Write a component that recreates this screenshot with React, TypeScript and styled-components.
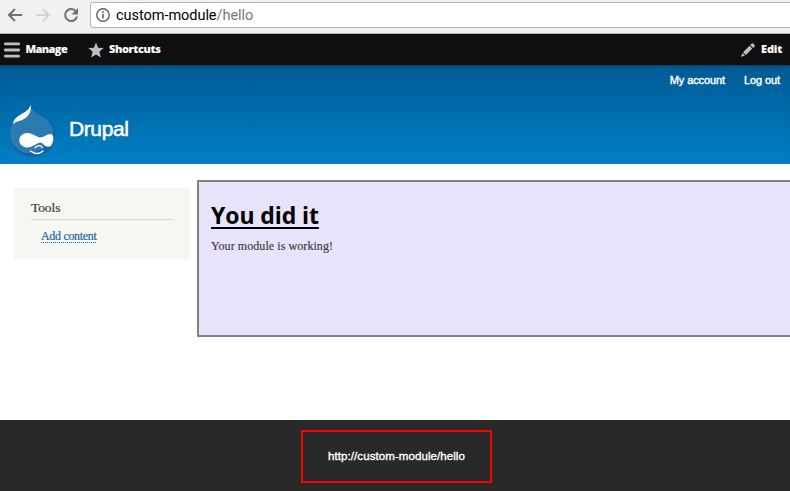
import React from 'react';
import styled, { createGlobalStyle } from 'styled-components';

const GlobalStyle = createGlobalStyle`
  * { box-sizing: border-box; }
  body { margin: 0; background: #fff; overflow: hidden; }
`;

const Page = styled.div`
  width: 790px;
  height: 491px;
  display: flex;
  flex-direction: column;
  overflow: hidden;
  white-space: nowrap;
  font-family: 'Liberation Sans', Arial, sans-serif;
`;

const BrowserBar = styled.div`
  height: 34px;
  flex: none;
  display: flex;
  align-items: flex-start;
  background: #f1f1f1;
  border-bottom: 1px solid #b4b9b2;
`;

const NavIcons = styled.svg`
  display: block;
  flex: none;
  width: 90px;
  height: 30px;
`;

const AddressBar = styled.div`
  flex: none;
  width: 710px;
  height: 26px;
  margin-top: 2px;
  display: flex;
  align-items: center;
  padding-left: 5px;
  background: #fff;
  border: 1px solid #b5b5b5;
  border-radius: 3px;
`;

const InfoIcon = styled.svg`
  width: 14px;
  height: 14px;
  display: block;
`;

const Url = styled.span`
  margin-left: 6px;
  padding-top: 2px;
  font: 14.5px/22px Roboto, sans-serif;
  letter-spacing: -0.04px;
  color: #000;
`;

const UrlPath = styled.span`
  color: #77777c;
`;

const AdminBar = styled.nav`
  height: 31px;
  flex: none;
  display: flex;
  align-items: center;
  background: #0f0f0f;
  padding: 0 8px 0 4px;
`;

const AdminIcon = styled.svg`
  display: block;
  flex: none;
  width: 16px;
  height: 16px;
`;

const AdminLabel = styled.span<{ $gap: number; $after?: number; $track: number }>`
  margin-left: ${p => p.$gap}px;
  margin-right: ${p => p.$after ?? 0}px;
  padding-bottom: 1px;
  font: 800 11px/30px 'Open Sans', sans-serif;
  letter-spacing: ${p => p.$track}px;
  color: #fff;
`;

const Spacer = styled.div`
  flex: 1;
`;

const Header = styled.header`
  height: 99px;
  flex: none;
  background: linear-gradient(#005a93, #0080c6);
  box-shadow: inset 0 2px 2px -1px rgba(0, 0, 0, 0.3);
`;

const AccountMenu = styled.div`
  height: 30px;
  display: flex;
  justify-content: flex-end;
  gap: 19px;
  padding-right: 10px;
  font-size: 11px;
  line-height: 30px;
  letter-spacing: -0.1px;
  color: #fff;
  -webkit-text-stroke: 0.4px #fff;
`;

const Branding = styled.div`
  display: flex;
  align-items: flex-start;
  padding: 9px 0 0 9px;
`;

const Logo = styled.svg`
  display: block;
  width: 48px;
  height: 54px;
`;

const SiteName = styled.span`
  margin: 11px 0 0 12px;
  font-size: 21px;
  line-height: 28px;
  letter-spacing: -0.4px;
  color: #fff;
  -webkit-text-stroke: 0.5px #fff;
`;

const Main = styled.main`
  height: 256px;
  flex: none;
  display: flex;
  align-items: flex-start;
  padding-left: 14px;
  background: #fff;
`;

const Sidebar = styled.aside`
  flex: none;
  width: 176px;
  height: 71px;
  margin: 24px 7px 0 0;
  padding: 11px 17px 0;
  background: #f6f6f2;
  font-family: 'Liberation Serif', Georgia, serif;
`;

const SidebarTitle = styled.h2`
  margin: 0;
  height: 21px;
  border-bottom: 1px solid #d6d6d3;
  font-size: 13.5px;
  font-weight: 400;
  line-height: 18px;
  letter-spacing: -0.1px;
  color: #3b3b3b;
  -webkit-text-stroke: 0.2px #3b3b3b;
`;

const SidebarLink = styled.a`
  display: inline-block;
  width: 55px;
  margin: 10px 0 0 10px;
  height: 13px;
  border-bottom: 1px dotted #0071b3;
  font-size: 12px;
  line-height: 13px;
  letter-spacing: -0.32px;
  color: #1c64a8;
  -webkit-text-stroke: 0.2px #1c64a8;
`;

const ModulePanel = styled.section`
  flex: none;
  width: 620px;
  height: 157px;
  margin-top: 16px;
  padding: 19px 12px;
  background: #e7e3fa;
  border: 2px solid #808080;
`;

const PanelTitle = styled.h1`
  width: 108px;
  height: 28px;
  margin: 0;
  border-bottom: 2px solid #000;
  font: 700 23px/29px 'Open Sans', sans-serif;
  letter-spacing: -0.1px;
  color: #000;
`;

const PanelText = styled.p`
  margin: 8px 0 0;
  font: 12px/18px 'Liberation Serif', Georgia, serif;
  letter-spacing: 0.07px;
  color: #3b3b3b;
  -webkit-text-stroke: 0.15px #3b3b3b;
`;

const Footer = styled.footer`
  height: 71px;
  flex: none;
  padding: 10px 0 0 301px;
  background: #292929;
`;

const FooterBox = styled.div`
  width: 191px;
  height: 53px;
  border: 2px solid #f00;
  text-align: center;
  font-size: 11.5px;
  line-height: 49px;
  letter-spacing: 0.08px;
  color: #fff;
  -webkit-text-stroke: 0.35px #fff;
`;

export default function App() {
  return (
    <Page>
      <GlobalStyle />
      <BrowserBar>
        <NavIcons viewBox="0 0 90 30" fill="none" strokeWidth="2">
          <path d="M22 15H9.500M15 9l-6 6 6 6" stroke="#6e6e73" />
          <path d="M36 15h12.500M43 9l6 6-6 6" stroke="#d4d4d6" />
          <path d="M76 11.500A6 6 0 1 0 77 16.500" stroke="#6e6e73" />
          <path d="M78 8v6.500h-6.500z" fill="#6e6e73" />
        </NavIcons>
        <AddressBar>
          <InfoIcon viewBox="0 0 14 14">
            <circle cx="7" cy="7" r="6.200" fill="none" stroke="#606064" strokeWidth="1.400" />
            <path d="M6.200 6h1.600v4.500H6.200zM6.200 3.300h1.600v1.600H6.200z" fill="#606064" />
          </InfoIcon>
          <Url>custom-module<UrlPath>/hello</UrlPath></Url>
        </AddressBar>
      </BrowserBar>

      <AdminBar>
        <AdminIcon viewBox="0 0 16 16">
          <path d="M1.300 1.900h13.400M1.300 8h13.400M1.300 14.100h13.400" stroke="#bebebe" strokeWidth="2.800" strokeLinecap="round" />
        </AdminIcon>
        <AdminLabel $gap={5.5} $after={21} $track={-0.6}>Manage</AdminLabel>
        <AdminIcon viewBox="0 0 16 16">
          <path d="M8 .4l2.100 5.300 5.500.4-4.200 3.700 1.400 5.700L8 12.400l-4.800 3.100 1.400-5.700L.4 6.100l5.500-.4z" fill="#bebebe" />
        </AdminIcon>
        <AdminLabel $gap={5} $track={-0.4}>Shortcuts</AdminLabel>
        <Spacer />
        <AdminIcon viewBox="0 0 16 16">
          <path d="M1.200 14.800l1-3.800 2.800 2.800zM3 10.200l6.500-6.500 2.900 2.900-6.500 6.500zM10.200 3l1.500-1.500q.8-.6 1.500 0l1.400 1.400q.6.700 0 1.500l-1.500 1.500z" fill="#bebebe" />
        </AdminIcon>
        <AdminLabel $gap={5} $track={-0.2}>Edit</AdminLabel>
      </AdminBar>

      <Header>
        <AccountMenu>
          <span>My account</span>
          <span>Log out</span>
        </AccountMenu>
        <Branding>
          <Logo viewBox="0 0 48 54">
            <path d="M21.500 1C22 6 25 8 31 11.500C40 16 46 22 46 31C46 44 36 52.500 23.500 52.500C10 52.500 1 43 1 30.500C1 22 4 18 10 13C16 10 20 7 21.500 1Z" fill="#13649f" stroke="#1b659c" strokeWidth=".7" />
            <path d="M21.500 1C22 6 25 8 31 11.500C39 15 45 23 44 29C42 42 31 49 18 49C10 48 4 42 2 36C-1 25 4 17 10 13C16 10 20 7 21.500 1Z" fill="#2b7bb0" />
            <path d="M21.500 1C22.500 6.500 20.500 11 16.500 14C12 17.500 8 16.500 4 20C4.500 13.500 12 10.500 16 8C19 6 20.500 4 21.500 1Z" fill="#fff" />
            <path d="M18.500 29C25 29.500 28 33.500 31 33.500C35 33.500 38 30 41.500 30C45.500 30 45 37 42.500 41C39.500 45 36 41.500 32 38.500C27 39 24 43.500 18 43.500C7.500 42.500 8 29 18.500 29Z" fill="#fff" />
            <path d="M26 43.800C28.500 41 32 41 33 43.500M21.500 47C26 50.500 30 50.500 34 47" fill="none" stroke="#fff" strokeWidth="1.400" strokeLinecap="round" />
          </Logo>
          <SiteName>Drupal</SiteName>
        </Branding>
      </Header>

      <Main>
        <Sidebar>
          <SidebarTitle>Tools</SidebarTitle>
          <SidebarLink>Add content</SidebarLink>
        </Sidebar>
        <ModulePanel>
          <PanelTitle>You did it</PanelTitle>
          <PanelText>Your module is working!</PanelText>
        </ModulePanel>
      </Main>

      <Footer>
        <FooterBox>http://custom-module/hello</FooterBox>
      </Footer>
    </Page>
  );
}
